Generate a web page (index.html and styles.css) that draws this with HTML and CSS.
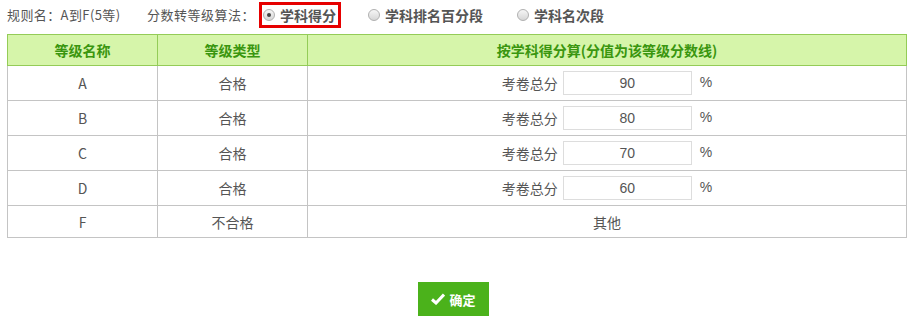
FILE: index.html
```html
<!DOCTYPE html>
<html lang="zh">
<head>
  <meta charset="UTF-8">
  <title>等级规则</title>
  <link rel="stylesheet" href="styles.css">
</head>
<body>
  <div class="page">
    <div class="rule-bar">
      <span class="rule-name">规则名：A到F(5等)</span>
      <span class="rule-label">分数转等级算法：</span>
      <label class="radio active"><span class="dot checked"></span>学科得分</label>
      <label class="radio second"><span class="dot"></span>学科排名百分段</label>
      <label class="radio"><span class="dot"></span>学科名次段</label>
    </div>

    <table class="grade-table">
      <thead>
        <tr>
          <th class="col-name">等级名称</th>
          <th class="col-type">等级类型</th>
          <th>按学科得分算(分值为该等级分数线)</th>
        </tr>
      </thead>
      <tbody>
        <tr>
          <td>A</td>
          <td>合格</td>
          <td><div class="score"><span>考卷总分</span><input type="text" value="90"><span class="pct">%</span></div></td>
        </tr>
        <tr>
          <td>B</td>
          <td>合格</td>
          <td><div class="score"><span>考卷总分</span><input type="text" value="80"><span class="pct">%</span></div></td>
        </tr>
        <tr>
          <td>C</td>
          <td>合格</td>
          <td><div class="score"><span>考卷总分</span><input type="text" value="70"><span class="pct">%</span></div></td>
        </tr>
        <tr>
          <td>D</td>
          <td>合格</td>
          <td><div class="score"><span>考卷总分</span><input type="text" value="60"><span class="pct">%</span></div></td>
        </tr>
        <tr class="last">
          <td>F</td>
          <td>不合格</td>
          <td>其他</td>
        </tr>
      </tbody>
    </table>

    <div class="actions">
      <button class="btn-ok">
        <svg width="14" height="12" viewBox="0 0 14 12"><path d="M1 6.5 L5 10 L13 1.5" fill="none" stroke="#fff" stroke-width="3"/></svg>
        确定
      </button>
    </div>
  </div>
</body>
</html>
```

FILE: styles.css
```css
body {
  margin: 0;
  font-family: "Noto Sans CJK SC", "Liberation Sans", sans-serif;
  color: #555;
  background: #fff;
}

.page {
  padding: 0 3px 0 7px;
}

.rule-bar {
  display: flex;
  align-items: center;
  height: 29px;
  font-size: 13px;
  white-space: nowrap;
}

.rule-bar > span {
  flex-shrink: 0;
}

.rule-name {
  width: 140px;
  letter-spacing: 0.4px;
}

.rule-label {
  width: 107px;
  letter-spacing: 0.5px;
}

.radio {
  display: flex;
  flex-shrink: 0;
  align-items: center;
  gap: 5px;
  height: 21px;
  padding: 0 3px;
  margin-right: 30px;
  font-size: 14px;
  font-weight: bold;
  color: #555;
  border: 2px solid transparent;
}

.radio.active {
  height: 20px;
  border: 3px solid #e60000;
  padding: 0 2px 0 1px;
  margin-left: 5px;
  margin-right: 22px;
}

.radio.second {
  margin-right: 24px;
}

.dot {
  position: relative;
  width: 12px;
  height: 12px;
  border: 1px solid #b0b0b0;
  border-radius: 50%;
  background: linear-gradient(#f6f6f6, #d6d6d6);
  box-sizing: border-box;
}

.dot.checked::after {
  content: "";
  position: absolute;
  left: 3px;
  top: 3px;
  width: 4px;
  height: 4px;
  border-radius: 50%;
  background: #444;
}

.grade-table {
  width: 900px;
  border-collapse: collapse;
  margin-top: 5px;
  font-size: 14px;
}

.grade-table th {
  height: 30px;
  padding: 0;
  background: #d6f5aa;
  border: 1px solid #94cc57;
  color: #3a960f;
  font-weight: bold;
  font-size: 14px;
}

.grade-table td {
  height: 34px;
  padding: 0;
  text-align: center;
  border: 1px solid #c4c4c4;
}

.grade-table tr.last td {
  height: 31px;
}

.col-name,
.col-type {
  width: 149px;
}

.score {
  display: flex;
  justify-content: center;
  align-items: center;
}

.score input {
  width: 129px;
  height: 24px;
  box-sizing: border-box;
  margin: 0 8px 0 5px;
  border: 1px solid #ddd;
  text-align: center;
  font-family: "Liberation Sans", sans-serif;
  font-size: 14px;
  color: #555;
  outline: none;
}

.pct {
  margin-top: -2px;
  font-family: "Liberation Sans", sans-serif;
}

.actions {
  display: flex;
  justify-content: center;
  margin-top: 44px;
  padding-right: 6px;
}

.btn-ok {
  display: flex;
  align-items: center;
  gap: 4px;
  height: 34px;
  padding: 0 13px;
  background: #4bb21b;
  color: #fff;
  border: none;
  font-family: "Noto Sans CJK SC", sans-serif;
  font-size: 13px;
  font-weight: bold;
  cursor: pointer;
}
```
